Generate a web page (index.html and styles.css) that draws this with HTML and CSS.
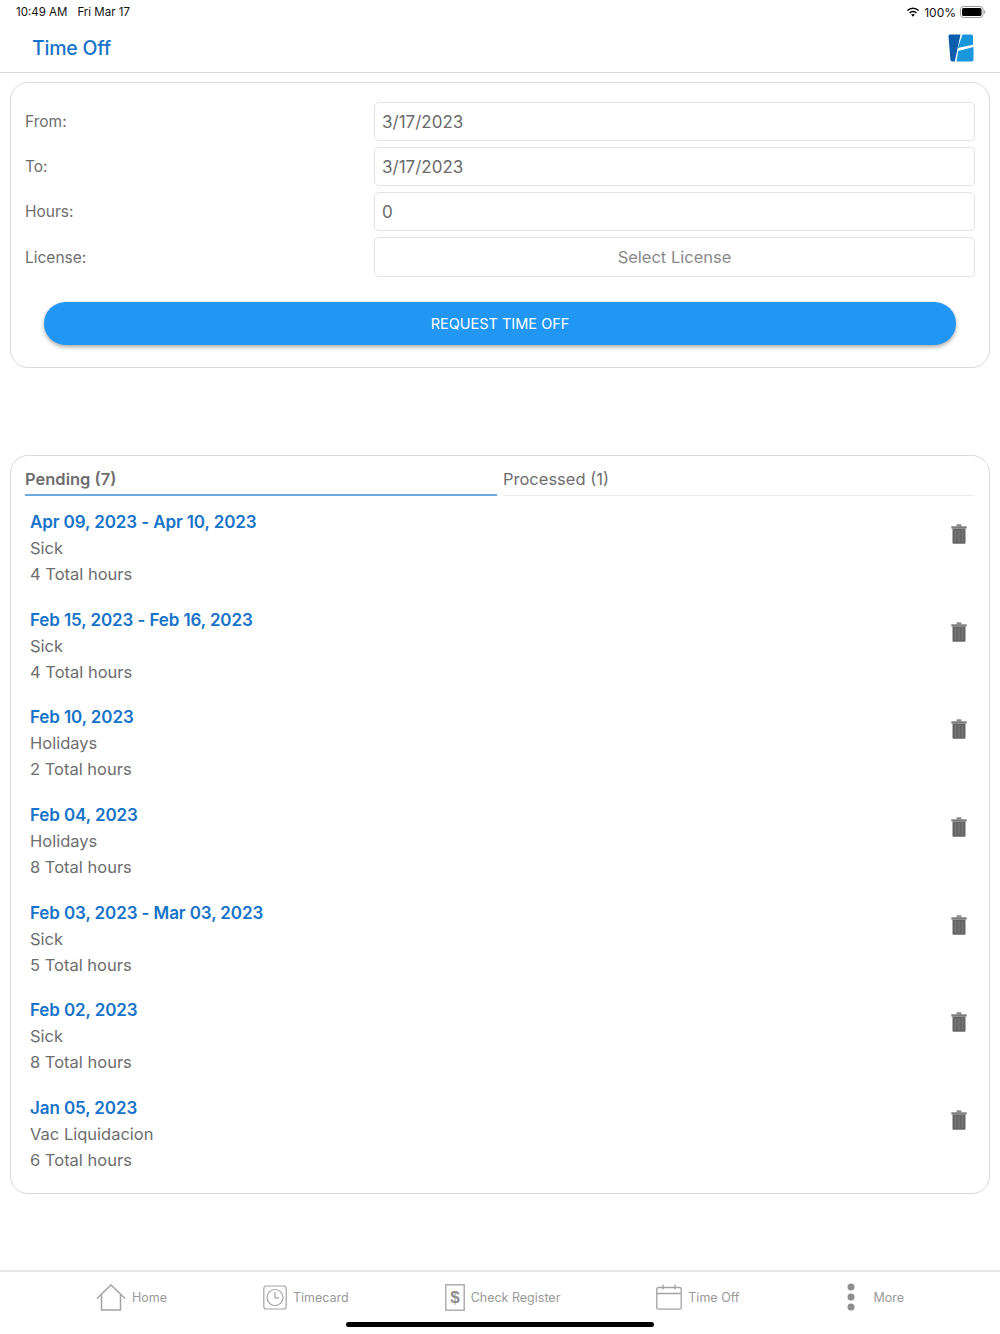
FILE: index.html
```html
<!DOCTYPE html>
<html lang="en">
<head>
<meta charset="utf-8">
<title>Time Off</title>
<link rel="stylesheet" href="styles.css">
</head>
<body>
<div class="page">
  <div class="status">
    <div class="status-left"><span>10:49 AM</span><span>Fri Mar 17</span></div>
    <div class="status-right">
      <svg class="wifi" width="14" height="11" viewBox="0 0 14 11"><path d="M7 2.1c2 0 3.8.8 5.1 2l1-1.1A9 9 0 0 0 7 .5 9 9 0 0 0 .9 3l1 1.1a7.4 7.4 0 0 1 5.1-2z" fill="#000"/><path d="M7 5.3c1.1 0 2.1.4 2.9 1.1l1-1.1A5.8 5.8 0 0 0 7 3.7a5.8 5.8 0 0 0-3.9 1.6l1 1.1c.8-.7 1.8-1.1 2.9-1.1z" fill="#000"/><path d="M7 6.9c-.8 0-1.4.3-1.9.7L7 9.7l1.9-2.1c-.5-.4-1.1-.7-1.9-.7z" fill="#000"/></svg>
      <span>100%</span>
      <svg class="battery" width="26" height="12" viewBox="0 0 26 12"><rect x=".5" y=".5" width="22.5" height="11" rx="3" fill="none" stroke="#9a9a9a"/><rect x="2" y="2" width="19.5" height="8" rx="1.6" fill="#000"/><path d="M24.2 4v4c.7-.2 1.2-1 1.2-2s-.5-1.8-1.2-2z" fill="#9a9a9a"/></svg>
    </div>
  </div>
  <header class="topbar">
    <h1 class="title">Time Off</h1>
    <svg class="logo" width="26" height="28" viewBox="0 0 26 28"><path d="M2 .5h10.500L6.800 27.500H4.500C3 27.500 2.500 26.500 2.400 25.500L.500 2.500C.400 1.300 1 .500 2 .500z" fill="#0a5cad"/><path d="M14.500 .5h8.500c1.300 0 2 .8 2 2v8.300L9.700 14z" fill="#1a96dc"/><path d="M25.500 13v12.500c0 1.300-.7 2-2 2H8.500L10.200 17z" fill="#1a96dc"/></svg>
  </header>
  <section class="card form-card">
    <div class="field"><label class="field-label">From:</label><div class="input">3/17/2023</div></div>
    <div class="field"><label class="field-label">To:</label><div class="input">3/17/2023</div></div>
    <div class="field"><label class="field-label">Hours:</label><div class="input">0</div></div>
    <div class="field field-last"><label class="field-label">License:</label><div class="input input-select">Select License</div></div>
    <button class="primary">REQUEST TIME OFF</button>
  </section>
  <section class="card list-card">
    <div class="tabs">
      <div class="tab tab-active">Pending (7)</div>
      <div class="tab">Processed (1)</div>
    </div>
    <div class="rows">
      <div class="row"><div><div class="row-title">Apr 09, 2023 - Apr 10, 2023</div><div class="row-text">Sick</div><div class="row-text">4 Total hours</div></div><svg class="trash" width="16" height="20" viewBox="0 0 16 20"><use href="#trash"/></svg></div>
      <div class="row"><div><div class="row-title">Feb 15, 2023 - Feb 16, 2023</div><div class="row-text">Sick</div><div class="row-text">4 Total hours</div></div><svg class="trash" width="16" height="20" viewBox="0 0 16 20"><use href="#trash"/></svg></div>
      <div class="row"><div><div class="row-title">Feb 10, 2023</div><div class="row-text">Holidays</div><div class="row-text">2 Total hours</div></div><svg class="trash" width="16" height="20" viewBox="0 0 16 20"><use href="#trash"/></svg></div>
      <div class="row"><div><div class="row-title">Feb 04, 2023</div><div class="row-text">Holidays</div><div class="row-text">8 Total hours</div></div><svg class="trash" width="16" height="20" viewBox="0 0 16 20"><use href="#trash"/></svg></div>
      <div class="row"><div><div class="row-title">Feb 03, 2023 - Mar 03, 2023</div><div class="row-text">Sick</div><div class="row-text">5 Total hours</div></div><svg class="trash" width="16" height="20" viewBox="0 0 16 20"><use href="#trash"/></svg></div>
      <div class="row"><div><div class="row-title">Feb 02, 2023</div><div class="row-text">Sick</div><div class="row-text">8 Total hours</div></div><svg class="trash" width="16" height="20" viewBox="0 0 16 20"><use href="#trash"/></svg></div>
      <div class="row"><div><div class="row-title">Jan 05, 2023</div><div class="row-text">Vac Liquidacion</div><div class="row-text">6 Total hours</div></div><svg class="trash" width="16" height="20" viewBox="0 0 16 20"><use href="#trash"/></svg></div>
    </div>
  </section>
  <nav class="tabbar">
    <div class="nav-item">
      <svg width="30" height="27" viewBox="0 0 30 27" fill="none" stroke="#a3a3a3" stroke-width="1.500"><path d="M1 14.500 15 1l14 13.500"/><path d="M5.500 11v15h19V11"/></svg>
      <span>Home</span>
    </div>
    <div class="nav-item">
      <svg width="24" height="25" viewBox="0 0 24 25" fill="none" stroke="#a3a3a3" stroke-width="1.200"><rect x=".8" y="1" width="22.400" height="23" rx="2.500"/><circle cx="12" cy="12.500" r="8"/><path d="M12 7v5.800h4"/></svg>
      <span>Timecard</span>
    </div>
    <div class="nav-item">
      <svg width="20" height="27" viewBox="0 0 20 27" fill="none" stroke="#a3a3a3" stroke-width="1.300"><rect x=".8" y=".8" width="18.400" height="25.400"/><text class="dollar" x="10" y="19" text-anchor="middle">$</text></svg>
      <span>Check Register</span>
    </div>
    <div class="nav-item">
      <svg width="26" height="26" viewBox="0 0 26 26" fill="none" stroke="#a3a3a3" stroke-width="1.300"><rect x=".8" y="3.500" width="24.400" height="21.700" rx="1.500"/><path d="M.8 9.500h24.400M7 .5v5M19 .5v5"/></svg>
      <span>Time Off</span>
    </div>
    <div class="nav-item nav-more">
      <svg width="32" height="28" viewBox="0 0 32 28" fill="#8e8e8e"><circle cx="16" cy="4" r="3.500"/><circle cx="16" cy="14" r="3.500"/><circle cx="16" cy="24" r="3.500"/></svg>
      <span>More</span>
    </div>
  </nav>
  <div class="home-indicator"></div>
</div>
<svg class="defs" width="0" height="0"><defs><g id="trash"><path d="M5.500 1.500C5.500.7 6 .3 6.500.3h3c.6 0 1 .4 1 1.200V2.500h-5z" fill="#8a8a8a"/><rect x=".3" y="2.300" width="15.400" height="2.200" fill="#7c7c7c"/><path d="M1.500 4.500h13v14.200c0 .6-.4 1-1 1h-11c-.6 0-1-.4-1-1z" fill="#666"/><path d="M4.500 6v12M8 6v12M11.500 6v12" stroke="#7a7a7a" stroke-width="1"/></g></defs></svg>
</body>
</html>
```
FILE: styles.css
```css
* { box-sizing: border-box; }
html, body { margin: 0; padding: 0; background: #fff; }
body { font-family: Inter, "Liberation Sans", sans-serif; color: #6b6b6b; }
.page { width: 1000px; height: 1334px; display: flex; flex-direction: column; overflow: hidden; }
.defs { display: block; height: 0; }

.status { height: 24px; padding: 0 14px 0 16px; display: flex; justify-content: space-between; align-items: center; font-size: 11.500px; color: #111; }
.status-left { display: flex; gap: 10px; }
.status-right { display: flex; align-items: center; gap: 4px; font-size: 12px; }

.topbar { height: 49px; padding: 0 26px 0 32px; display: flex; justify-content: space-between; align-items: center; border-bottom: 1px solid #d9d9d9; }
.title { margin: 0; font-size: 19.500px; font-weight: 500; color: #1673c9; letter-spacing: -0.2px; }

.card { margin: 0 10px; border: 1px solid #d9d9d9; border-radius: 18px; background: #fff; }
.form-card { margin-top: 9px; height: 286px; padding: 19px 14px 0; }
.field { display: flex; align-items: center; margin-bottom: 6px; height: 39px; }
.field-last { margin-bottom: 25px; height: 40px; }
.field-label { width: 349px; font-size: 15.500px; color: #6e6e6e; }
.input { flex: 1; height: 100%; border: 1px solid #e3e3e3; border-radius: 5px; padding: 0 7px; display: flex; align-items: center; font-size: 17px; color: #6b6b6b; }
.input-select { justify-content: center; color: #8a8a8a; font-size: 16.500px; }
.primary { display: block; width: 912px; height: 43px; margin-left: 19px; border: 0; border-radius: 22px; background: #2196f3; color: #fff; font-family: inherit; font-size: 14.500px; box-shadow: 0 2px 4px rgba(0, 0, 0, 0.35); }

.list-card { margin-top: 87px; height: 739px; padding: 0 14px; }
.tabs { display: flex; gap: 6px; height: 40px; }
.tab { flex: 1; display: flex; align-items: center; padding-top: 7px; font-size: 16.500px; border-bottom: 1px solid #ececec; color: #6e6e6e; }
.tab-active { font-weight: 600; border-bottom: 2px solid #6fa8dc; }
.rows { padding-top: 13px; }
.row { height: 97.670px; padding-left: 5px; padding-right: 8px; display: flex; justify-content: space-between; align-items: flex-start; }
.row-title { font-size: 17px; line-height: 26px; font-weight: 600; color: #1673c9; letter-spacing: -0.1px; }
.row-text { font-size: 16.500px; line-height: 26px; color: #6e6e6e; }
.trash { margin-top: 15px; }

.tabbar { margin-top: 76px; height: 52px; border-top: 2px solid #e8e8e8; display: flex; justify-content: space-evenly; align-items: center; padding-bottom: 0; }
.nav-item { display: flex; align-items: center; gap: 6px; font-size: 12.500px; color: #9a9a9a; }
.dollar { font-family: "Liberation Sans", sans-serif; font-size: 17px; font-weight: 700; fill: #8e8e8e; stroke: none; }
.home-indicator { width: 308px; height: 5px; margin: 0 auto; border-radius: 3px; background: #000; }
```
